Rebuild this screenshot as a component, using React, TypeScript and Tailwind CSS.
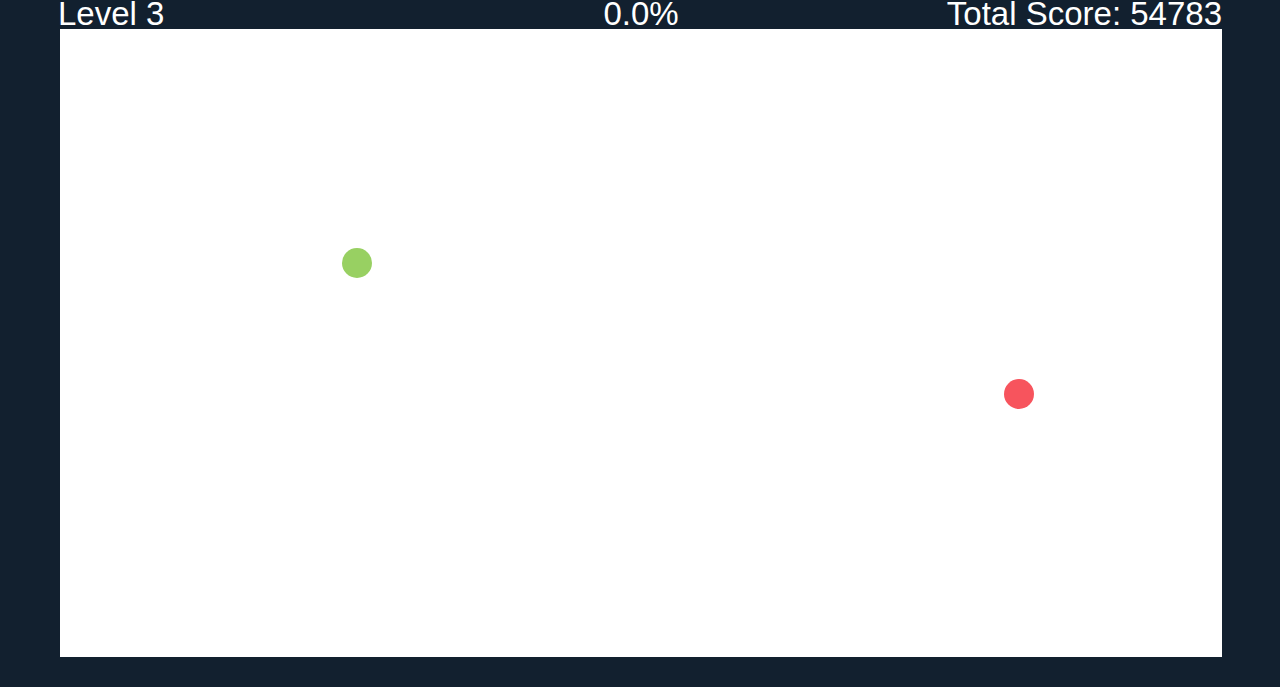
import React from "react";

export default function App() {
  return (
    <div className="w-[1280px] h-[687px] bg-[#12202f] overflow-hidden" style={{ fontFamily: '"Liberation Sans", Arial, sans-serif' }}>
      <div className="ml-[60px] w-[1162px]">
        <div className="h-[29px] grid grid-cols-3 text-white text-[33px] leading-[28px] whitespace-nowrap">
          <span className="-ml-[2px]">Level 3</span>
          <span className="text-center">0.0%</span>
          <span className="text-right">Total Score: 54783</span>
        </div>
        <div className="relative h-[628px] bg-white">
          <div className="absolute left-[282px] top-[219px] w-[30px] h-[30px] rounded-full bg-[#98d062]" />
          <div className="absolute left-[944px] top-[350px] w-[30px] h-[30px] rounded-full bg-[#f7545d]" />
        </div>
      </div>
    </div>
  );
}
